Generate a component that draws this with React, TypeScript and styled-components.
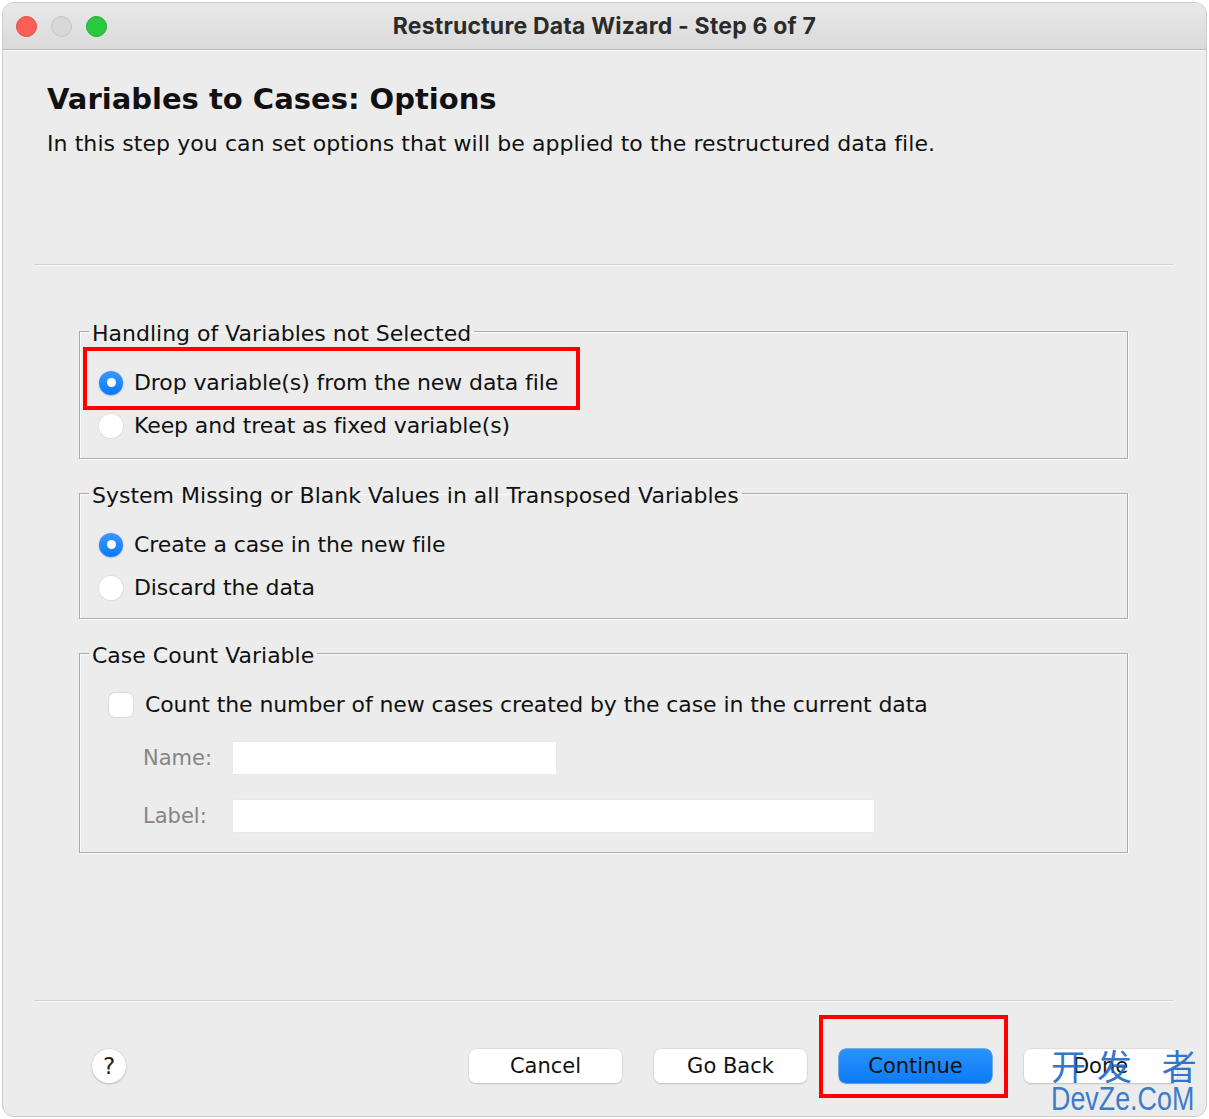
import React from "react";
import styled, { createGlobalStyle, css } from "styled-components";

const Global = createGlobalStyle`
  html, body { margin: 0; padding: 0; background: #ffffff; }
  body { font-family: "DejaVu Sans", "Liberation Sans", sans-serif; }
  * { box-sizing: border-box; }
`;

const Window = styled.div`
  position: relative;
  margin: 2px;
  width: 1205px;
  height: 1115px;
  border: 1px solid #cdcdcd;
  border-radius: 12px;
  overflow: hidden;
  background: #ececec;
  display: flex;
  flex-direction: column;
`;

const TitleBar = styled.div`
  height: 47px;
  flex: none;
  display: grid;
  grid-template-columns: 1fr auto 1fr;
  align-items: center;
  padding: 0 13px;
  background: linear-gradient(#e9e9e9, #dadada);
  border-bottom: 1px solid #bcbcbc;
  box-shadow: 0 1px 0 #f6f6f6;
`;

const Lights = styled.div`
  display: flex;
  gap: 14px;
`;

const Light = styled.span<{ $color: string; $edge: string }>`
  width: 21px;
  height: 21px;
  border-radius: 50%;
  background: ${(p) => p.$color};
  border: 1px solid ${(p) => p.$edge};
`;

const Title = styled.div`
  font-family: Inter, "Liberation Sans", sans-serif;
  font-weight: 700;
  font-size: 23px;
  color: #2b2b2b;
  letter-spacing: 0.2px;
`;

const Body = styled.div`
  flex: 1;
  display: flex;
  flex-direction: column;
  padding: 0 33px 0 31px;
`;

const Header = styled.div`
  height: 214px;
  padding: 31px 0 0 13px;
`;

const Heading = styled.h1`
  margin: 0;
  font-size: 29px;
  line-height: 36px;
  font-weight: 700;
  color: #111;
`;

const Subtitle = styled.p`
  margin: 13px 0 0;
  font-size: 22px;
  line-height: 28px;
  color: #111;
  letter-spacing: 0.08px;
`;

const Separator = styled.div`
  height: 2px;
  flex: none;
  border-top: 1px solid #d2d2d2;
  border-bottom: 1px solid #f8f8f8;
`;

const Groups = styled.div`
  display: flex;
  flex-direction: column;
  gap: 18px;
  padding: 49px 45px 0 45px;
`;

const Group = styled.fieldset<{ $bottom: number }>`
  margin: 0;
  min-width: 0;
  padding: 14px 0 ${(p) => p.$bottom}px 19px;
  border: 1px solid #ababab;
  box-shadow: 1px 1px 0 #fbfbfb, inset 1px 1px 0 #fbfbfb;
`;

const Legend = styled.legend`
  margin-left: -10px;
  padding: 6px 3px 0 3px;
  font-size: 22px;
  line-height: 26px;
  color: #111;
`;

const OptionRow = styled.div<{ $indent?: number }>`
  position: relative;
  height: 43px;
  display: flex;
  align-items: center;
  padding-left: ${(p) => p.$indent ?? 0}px;
  font-size: 22px;
  color: #111;
  letter-spacing: -0.1px;
`;

const Radio = styled.span<{ $checked?: boolean }>`
  width: 24px;
  height: 24px;
  border-radius: 50%;
  flex: none;
  margin-right: 11px;
  display: flex;
  align-items: center;
  justify-content: center;
  ${(p) =>
    p.$checked
      ? css`
          background: linear-gradient(#3b97ff, #0a7aff);
          box-shadow: 0 0.5px 1.5px rgba(0, 60, 160, 0.45);
          &::after {
            content: "";
            width: 9px;
            height: 9px;
            border-radius: 50%;
            background: #ffffff;
          }
        `
      : css`
          background: #ffffff;
          box-shadow: 0 0 0 1px #e0e0e0, 0 1px 1px rgba(0, 0, 0, 0.08);
        `}
`;

const Checkbox = styled.span`
  width: 24px;
  height: 24px;
  border-radius: 6px;
  flex: none;
  margin-right: 12px;
  background: #ffffff;
  box-shadow: 0 0 0 1px #dcdcdc, 0 1px 1px rgba(0, 0, 0, 0.08);
`;

const Highlight = styled.div<{ $l: number; $t: number; $w: number; $h: number }>`
  position: absolute;
  left: ${(p) => p.$l}px;
  top: ${(p) => p.$t}px;
  width: ${(p) => p.$w}px;
  height: ${(p) => p.$h}px;
  border: 4px solid #fe0000;
  pointer-events: none;
`;

const Fields = styled.div`
  display: flex;
  flex-direction: column;
  gap: 26px;
  margin-top: 16px;
  padding-left: 44px;
`;

const FieldRow = styled.div`
  display: flex;
  align-items: center;
  height: 32px;
`;

const FieldLabel = styled.span`
  width: 90px;
  font-size: 21px;
  color: #858585;
`;

const Input = styled.div<{ $w: number }>`
  width: ${(p) => p.$w}px;
  height: 32px;
  background: #ffffff;
  box-shadow: 0 0 0 0.5px #e6e6e6;
`;

const Spacer = styled.div`
  flex: 1;
`;

const Footer = styled.div`
  flex: none;
  display: flex;
  align-items: center;
  gap: 32px;
  padding: 47px 29px 33px 89px;
`;

const Help = styled.div`
  width: 34px;
  height: 34px;
  border-radius: 50%;
  margin-right: auto;
  background: #ffffff;
  box-shadow: 0 0 0 0.5px #d0d0d0, 0 1px 2px rgba(0, 0, 0, 0.25);
  display: flex;
  align-items: center;
  justify-content: center;
  font-size: 23px;
  color: #222;
`;

const Button = styled.div<{ $primary?: boolean }>`
  position: relative;
  width: 153px;
  height: 34px;
  border-radius: 7px;
  display: flex;
  align-items: center;
  justify-content: center;
  font-size: 21px;
  color: #111;
  background: ${(p) => (p.$primary ? "linear-gradient(#2a92ff, #0b7bf7)" : "#ffffff")};
  box-shadow: ${(p) =>
    p.$primary
      ? "0 0 0 0.5px #0a6fe0, 0 1px 1.5px rgba(0,0,0,0.2)"
      : "0 0 0 0.5px #d2d2d2, 0 1px 1.5px rgba(0,0,0,0.22)"};
`;

const Watermark = styled.div`
  position: absolute;
  left: 1048px;
  top: 1046px;
  display: flex;
  flex-direction: column;
  align-items: flex-start;
  color: #2068c4;
  pointer-events: none;
`;

const WmCn = styled.span`
  font-family: "Noto Sans CJK SC", sans-serif;
  font-size: 35px;
  line-height: 32px;
  letter-spacing: 11px;
  white-space: pre;
  opacity: 0.9;
`;

const WmEn = styled.span`
  font-family: "Liberation Sans", sans-serif;
  font-size: 34px;
  line-height: 34px;
  transform: scaleX(0.79);
  transform-origin: left center;
  opacity: 0.85;
`;

export default function App() {
  return (
    <>
      <Global />
      <Window>
        <TitleBar>
          <Lights>
            <Light $color="#fe5f57" $edge="#e2463f" />
            <Light $color="#d8d8d8" $edge="#c4c4c4" />
            <Light $color="#28c840" $edge="#1aab2c" />
          </Lights>
          <Title>Restructure Data Wizard - Step 6 of 7</Title>
          <span />
        </TitleBar>
        <Body>
          <Header>
            <Heading>Variables to Cases: Options</Heading>
            <Subtitle>
              In this step you can set options that will be applied to the restructured data file.
            </Subtitle>
          </Header>
          <Separator />
          <Groups>
            <Group $bottom={11}>
              <Legend>Handling of Variables not Selected</Legend>
              <OptionRow>
                <Radio $checked />
                Drop variable(s) from the new data file
                <Highlight $l={-16} $t={-14} $w={497} $h={63} />
              </OptionRow>
              <OptionRow>
                <Radio />
                Keep and treat as fixed variable(s)
              </OptionRow>
            </Group>
            <Group $bottom={9}>
              <Legend>System Missing or Blank Values in all Transposed Variables</Legend>
              <OptionRow>
                <Radio $checked />
                Create a case in the new file
              </OptionRow>
              <OptionRow>
                <Radio />
                Discard the data
              </OptionRow>
            </Group>
            <Group $bottom={20}>
              <Legend>Case Count Variable</Legend>
              <OptionRow $indent={10}>
                <Checkbox />
                Count the number of new cases created by the case in the current data
              </OptionRow>
              <Fields>
                <FieldRow>
                  <FieldLabel>Name:</FieldLabel>
                  <Input $w={323} />
                </FieldRow>
                <FieldRow>
                  <FieldLabel>Label:</FieldLabel>
                  <Input $w={641} />
                </FieldRow>
              </Fields>
            </Group>
          </Groups>
          <Spacer />
          <Separator />
        </Body>
        <Footer>
          <Help>?</Help>
          <Button>Cancel</Button>
          <Button>Go Back</Button>
          <Button $primary>
            Continue
            <Highlight $l={-20} $t={-34} $w={189} $h={83} />
          </Button>
          <Button>Done</Button>
        </Footer>
        <Watermark>
          <WmCn>{"开发 者"}</WmCn>
          <WmEn>DevZe.CoM</WmEn>
        </Watermark>
      </Window>
    </>
  );
}
